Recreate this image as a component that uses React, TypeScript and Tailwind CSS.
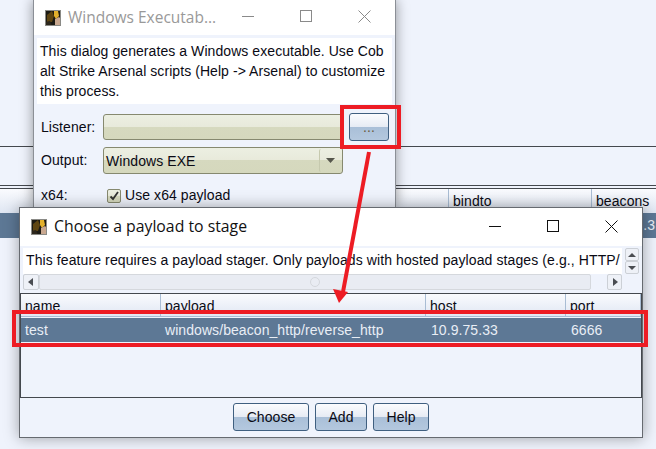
import React from "react";

const sans = "font-['Liberation_Sans',Arial,sans-serif]";
const btnBg =
  "bg-[linear-gradient(to_bottom,#fbfcfe_0%,#e6ebf4_50%,#a9bfd8_50%,#b4c8de_100%)]";
const fieldBg =
  "bg-[linear-gradient(to_bottom,#ecefe2_0%,#e8eadb_48%,#d6d9bf_48%,#d5d8bd_100%)]";
const headerBg = "bg-[linear-gradient(to_bottom,#fafbfe_0%,#dfe6f2_100%)]";

const AppLogo = () => (
  <svg width="16" height="16" viewBox="0 0 16 16" className="shrink-0">
    <rect width="16" height="16" fill="#1c1a14" />
    <path d="M2 5l5-4 2 5-2 6H2z" fill="#5e4512" />
    <path d="M9 0l4 1 1 5-3 3-2-3z" fill="#e3b02c" />
    <path d="M10 9l4-2 2 2v7h-6z" fill="#c9a890" />
    <path d="M0 12l5-1 2 5H0z" fill="#2c261c" />
    <rect x="0.5" y="0.5" width="15" height="15" fill="none" stroke="#8a8a86" />
  </svg>
);

const WindowControls = ({ color, className }: { color: string; className: string }) => (
  <div className={className}>
    <svg width="13" height="13" viewBox="0 0 13 13" fill="none" stroke={color}>
      <path d="M0 6.5h12" />
    </svg>
    <svg width="13" height="13" viewBox="0 0 13 13" fill="none" stroke={color}>
      <rect x="0.5" y="0.5" width="11" height="11" />
    </svg>
    <svg width="13" height="13" viewBox="0 0 13 13" fill="none" stroke={color}>
      <path d="M0.5 0.5l12 12M12.5 0.5l-12 12" />
    </svg>
  </div>
);

const Btn = ({ label, className }: { label: string; className: string }) => (
  <button
    className={`h-[28px] rounded-[3px] border border-[#3f5f80] ${btnBg} text-[14px] text-[#0a0a14] ${className}`}
  >
    {label}
  </button>
);

const Arrow = ({ dir }: { dir: "left" | "right" | "up" | "down" }) => {
  const d = {
    left: "M7 1v8L2 5z",
    right: "M3 1v8l5-4z",
    up: "M1 7h8L5 3z",
    down: "M1 3h8L5 7z",
  }[dir];
  return (
    <svg width="10" height="10" viewBox="0 0 10 10" className="shrink-0">
      <path d={d} fill="#4a4d52" />
    </svg>
  );
};

const ScrollBtn = ({ dir, className }: { dir: "left" | "right" | "up" | "down"; className: string }) => (
  <div
    className={`flex shrink-0 items-center justify-center rounded-[2px] border border-[#ccd0d6] bg-[#eef1f7] ${className}`}
  >
    <Arrow dir={dir} />
  </div>
);

const BackWindow = () => (
  <div className="absolute left-[33px] top-0 h-[207px] w-[363px] border-x border-[#8b8f96] bg-[#eff3fc] shadow-[0_0_12px_rgba(0,0,0,0.4)]">
    <div className="flex h-[35px] items-center bg-white pl-[11px]">
      <AppLogo />
      <span className="ml-[7px] font-['Open_Sans',sans-serif] text-[15.5px] tracking-normal text-[#999999]">
        Windows Executab...
      </span>
      <WindowControls
        color="#8a8a8a"
        className="mb-[2px] ml-auto mr-[24px] flex w-[129px] justify-between"
      />
    </div>
    <div className="mx-[3px] mt-[3px] h-[66px] bg-white px-[3px] pt-[3px] text-[14px] leading-[20px] text-[#0a0a14]">
      <p>This dialog generates a Windows executable. Use Cob</p>
      <p>alt Strike Arsenal scripts (Help -&gt; Arsenal) to customize</p>
      <p>this process.</p>
    </div>
    <div className="mt-[9px] flex items-center pl-[7px] text-[14px] text-[#0a0a14]">
      <span className="w-[62px]">Listener:</span>
      <div className={`h-[26px] w-[240px] rounded-[3px] border border-[#86896f] ${fieldBg}`} />
      <button
        className={`ml-[6px] h-[28px] w-[40px] rounded-[3px] border border-[#3f5f80] ${btnBg} text-[14px] text-[#6b5a3a]`}
      >
        ...
      </button>
    </div>
    <div className="mt-[6px] flex items-center pl-[7px] text-[14px] text-[#0a0a14]">
      <span className="w-[62px]">Output:</span>
      <div
        className={`flex h-[27px] w-[240px] items-center rounded-[3px] border border-[#86896f] pl-[2px] ${fieldBg}`}
      >
        <span className="mt-[1px]">Windows EXE</span>
        <div className="ml-auto mr-[1px] flex h-[23px] w-[22px] items-center justify-center rounded-[2px] border-l border-[#c6c9ae]">
          <svg width="9" height="5" viewBox="0 0 9 5">
            <path d="M0 0h9L4.5 5z" fill="#55564c" />
          </svg>
        </div>
      </div>
    </div>
    <div className="mt-[11px] flex items-center pl-[7px] text-[14px] text-[#0a0a14]">
      <span className="w-[66px]">x64:</span>
      <div
        className={`flex h-[14px] w-[14px] items-center justify-center rounded-[2px] border border-[#86896f] ${fieldBg}`}
      >
        <svg width="10" height="10" viewBox="0 0 10 10" fill="none" stroke="#333" strokeWidth="1.8">
          <path d="M1.5 5.5l2.5 2.5 5-7" />
        </svg>
      </div>
      <span className="ml-[4px]">Use x64 payload</span>
    </div>
  </div>
);

const FrontWindow = () => (
  <div className="absolute left-[19px] top-[207px] flex h-[231px] w-[624px] flex-col border border-[#666a70] bg-[#eff3fc] shadow-[0_0_14px_rgba(0,0,0,0.35)]">
    <div className="flex h-[38px] shrink-0 items-center bg-white pl-[11px]">
      <AppLogo />
      <span className="ml-[7px] font-['Open_Sans',sans-serif] text-[15.8px] tracking-normal text-[#111111]">
        Choose a payload to stage
      </span>
      <WindowControls
        color="#111111"
        className="mb-[2px] ml-auto mr-[24px] flex w-[129px] justify-between"
      />
    </div>
    <div className="relative mt-[2px] h-[26px] shrink-0 pl-[3px]">
      <div className="h-full w-[599px] whitespace-nowrap bg-white pl-[3px] pt-[2px] text-[14px] leading-[20px] tracking-[0.1px] text-[#0a0a14]">
        This feature requires a payload stager. Only payloads with hosted payload stages (e.g., HTTP/
      </div>
      <div className="absolute right-[3px] top-0 flex flex-col">
        <ScrollBtn dir="up" className="h-[13px] w-[14px]" />
        <ScrollBtn dir="down" className="h-[13px] w-[14px]" />
      </div>
    </div>
    <div className="flex h-[16px] w-[602px] shrink-0 items-stretch pl-[3px]">
      <ScrollBtn dir="left" className="w-[16px]" />
      <div className="flex flex-1 items-center justify-end rounded-[2px] border border-[#d5d8dd] bg-[#e9ecf3] pr-[270px]">
        <span className="h-[10px] w-[10px] rounded-full border border-[#d5d8dd]" />
      </div>
      <div className="w-[16px] shrink-0" />
      <ScrollBtn dir="right" className="w-[15px]" />
    </div>
    <div className="mt-[3px] flex-1 border border-[#44484e]">
      <div className="grid h-[23px] grid-cols-[140px_265px_140px_1fr] overflow-hidden border-b border-[#a9bdd4] text-[14px] leading-[24px] text-[#0a0a14]">
        {["name", "payload", "host", "port"].map((col) => (
          <div key={col} className={`h-[23px] border-r border-[#a9bdd4] pl-[4px] ${headerBg}`}>
            {col}
          </div>
        ))}
      </div>
      <div className="mt-[1px] grid h-[24px] grid-cols-[140px_265px_140px_1fr] items-center bg-[#5d7895] text-[14px] text-[#e9eef5]">
        <span className="pl-[4px]">test</span>
        <span className="pl-[4px]">windows/beacon_http/reverse_http</span>
        <span className="pl-[5px]">10.9.75.33</span>
        <span className="pl-[5px]">6666</span>
      </div>
    </div>
    <div className="flex h-[39px] shrink-0 justify-center gap-[6px] pt-[5px]">
      <Btn label="Choose" className="w-[76px]" />
      <Btn label="Add" className="w-[52px]" />
      <Btn label="Help" className="w-[56px]" />
    </div>
  </div>
);

const Annotations = () => (
  <svg className="absolute left-0 top-0" width="656" height="449" viewBox="0 0 656 449" fill="none">
    <rect x="342" y="107" width="57" height="40" stroke="#ed1c24" strokeWidth="4" />
    <rect x="14" y="312" width="632" height="33" stroke="#ed1c24" strokeWidth="4" />
    <path d="M369 152L343 292" stroke="#ed1c24" strokeWidth="4" />
    <path d="M339 303L333 289L348 292z" fill="#ed1c24" />
  </svg>
);

export default function App() {
  return (
    <div className={`relative h-[449px] w-[656px] overflow-hidden bg-[#eff3fc] tracking-[0.07px] ${sans}`}>
      <div className="h-[147px] border-b border-[#44484e]" />
      <div className="mt-[38px] h-[4px] border-y border-[#44484e]" />
      <div className="grid h-[24px] grid-cols-[449px_143px_1fr] overflow-hidden text-[14px] leading-[24px] text-[#0a0a14]">
        <div className={`border-r border-[#a9bdd4] ${headerBg}`} />
        <div className={`border-r border-[#a9bdd4] pl-[4px] ${headerBg}`}>bindto</div>
        <div className={`pl-[4px] ${headerBg}`}>beacons</div>
      </div>
      <div className="flex h-[25px] items-center justify-end bg-[#5d7895] pr-[1px] text-[14px] text-[#e9eef5]">
        75.3
      </div>
      <BackWindow />
      <FrontWindow />
      <Annotations />
    </div>
  );
}
